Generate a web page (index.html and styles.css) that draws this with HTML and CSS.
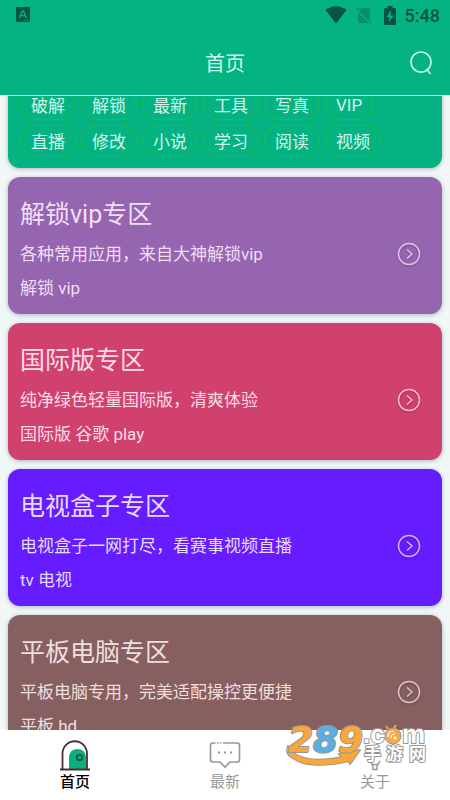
FILE: index.html
```html
<!DOCTYPE html>
<html lang="zh-CN">
<head>
<meta charset="utf-8">
<meta name="viewport" content="width=device-width, initial-scale=1">
<title>首页</title>
<link rel="stylesheet" href="styles.css">
</head>
<body>
<header class="top">
  <div class="status">
    <svg class="app-icon" width="14" height="16" viewBox="0 0 14 16"><rect y="0" width="14" height="15" rx="1" fill="#075540"/><path d="M3.500 11 6.200 4h1.400l2.700 7M4.600 8.800h4.600" fill="none" stroke="#05b382" stroke-width="1.500"/><path d="M8 13.300h4" stroke="#05b382" stroke-dasharray="1 .6"/></svg>
    <svg width="22" height="18" viewBox="0 0 22 18"><path d="M.5 4Q11-3.500 21.500 4L11 17.500Z" fill="#075540"/></svg>
    <svg class="sim" width="16" height="18" viewBox="0 0 16 18"><path d="M5 2h9v12.500L3.500 4ZM2 6l10.500 11H2Z" fill="#078f69"/><path d="m1 2 14 15" stroke="#078f69" stroke-width="1.300"/></svg>
    <svg class="battery" width="12" height="19" viewBox="0 0 12 19"><path d="M3.500 0h5v2H11q1 0 1 1v15q0 1-1 1H1q-1 0-1-1V3q0-1 1-1h2.500Z" fill="#075540"/><path d="M7 4.500 2.500 11H5.500L5 16l4.500-6.500H6.500Z" fill="#05b382"/></svg>
    <span class="clock">5:48</span>
  </div>
  <div class="bar">
    <h1>首页</h1>
    <button class="search" aria-label="搜索"><svg width="24" height="26" viewBox="0 0 24 26"><circle cx="11" cy="12" r="10" fill="none" stroke="#c6f7e8" stroke-width="1.600"/><path d="m16.500 19 4 5" stroke="#c6f7e8" stroke-width="1.600"/></svg></button>
  </div>
</header>
<main class="feed">
  <section class="card tags">
    <button class="chip">破解</button><button class="chip">解锁</button><button class="chip">最新</button><button class="chip">工具</button><button class="chip">写真</button><button class="chip">VIP</button>
    <button class="chip">直播</button><button class="chip">修改</button><button class="chip">小说</button><button class="chip">学习</button><button class="chip">阅读</button><button class="chip">视频</button>
  </section>
  <a class="card zone purple" href="#vip">
    <div><h2>解锁vip专区</h2><p>各种常用应用，来自大神解锁vip</p><p>解锁 vip</p></div>
    <svg class="go" width="24" height="24" viewBox="0 0 24 24"><circle cx="12" cy="12" r="10.500"/><path d="m10 7.500 5 4.500-5 4.500"/></svg>
  </a>
  <a class="card zone red" href="#global">
    <div><h2>国际版专区</h2><p>纯净绿色轻量国际版，清爽体验</p><p>国际版 谷歌 play</p></div>
    <svg class="go" width="24" height="24" viewBox="0 0 24 24"><circle cx="12" cy="12" r="10.500"/><path d="m10 7.500 5 4.500-5 4.500"/></svg>
  </a>
  <a class="card zone blue" href="#tv">
    <div><h2>电视盒子专区</h2><p>电视盒子一网打尽，看赛事视频直播</p><p>tv 电视</p></div>
    <svg class="go" width="24" height="24" viewBox="0 0 24 24"><circle cx="12" cy="12" r="10.500"/><path d="m10 7.500 5 4.500-5 4.500"/></svg>
  </a>
  <a class="card zone brown" href="#pad">
    <div><h2>平板电脑专区</h2><p>平板电脑专用，完美适配操控更便捷</p><p>平板 hd</p></div>
    <svg class="go" width="24" height="24" viewBox="0 0 24 24"><circle cx="12" cy="12" r="10.500"/><path d="m10 7.500 5 4.500-5 4.500"/></svg>
  </a>
</main>
<nav class="tabs">
  <a class="tab active" href="#home">
    <svg width="32" height="32" viewBox="0 0 32 32"><path d="M10 29V16.500Q11 9 18.500 9T27 16.500V29Z" fill="#08b080"/><path d="M3.500 29V13.500a12.200 12.200 0 0 1 24.500 0V29M1 29.500h30" fill="none" stroke="#4a302c" stroke-width="1.800"/><circle cx="20.500" cy="17.500" r="2.800" fill="none" stroke="#24483a" stroke-width="1.500"/></svg>
    <span>首页</span>
  </a>
  <a class="tab" href="#new">
    <svg width="32" height="32" viewBox="0 0 32 32"><path d="M6.500 3H4Q1.500 3 1.500 5.500v14Q1.500 22 4 22h7l5 5 5-5h7q2.500 0 2.500-2.500v-14Q30.500 3 28 3H14" fill="none" stroke="#999" stroke-width="1.700"/><path d="M8 3h1.800M11 3h1.500" stroke="#999" stroke-width="1.700"/><path d="M9 12.500h2M15 12.500h2M21 12.500h2" stroke="#999" stroke-width="2"/></svg>
    <span>最新</span>
  </a>
  <a class="tab" href="#about">
    <svg width="32" height="32" viewBox="0 0 32 32"><path d="m11 21 3 5v3.500h4V26l3-5M12 24.500h8" fill="none" stroke="#999" stroke-width="1.500"/></svg>
    <span>关于</span>
  </a>
  <svg class="brand" width="144" height="50" viewBox="0 0 144 50">
    <g stroke="#969696" stroke-width="2" paint-order="stroke" stroke-linejoin="round">
      <path d="M3 22Q0 30 8 34Q24 46 64 37l1 3L75 26 54 30l3 3Q24 40 8 29Q4 26 3 22Z" fill="#fba63a"/>
      <g font-family="DejaVu Sans" font-weight="bold" font-style="italic" font-size="36"><text x="3" y="28" fill="#fba63a">2</text><text x="28" y="28" fill="#5aaee2">8</text><text x="53" y="28" fill="#fba63a">9</text></g>
      <g font-family="Liberation Sans" font-weight="bold" font-size="26" fill="#fff"><text x="78" y="19">.c</text><text x="117" y="19">m</text></g>
      <g font-family="Noto Sans CJK SC" font-weight="bold" font-size="17" fill="#fff"><text x="79" y="36">手</text><text x="101" y="36">游</text><text x="124" y="36">网</text></g>
    </g>
    <circle cx="108" cy="12" r="8" fill="#f6aa47" stroke="#969696"/><path d="M103 13q0-6 6-6M106 14q0-4 4-4" fill="none" stroke="#fff" stroke-width="1.200"/><circle cx="110" cy="14" r="1.500" fill="#fff"/><path d="m103 5-2-3M109 4l2-3" stroke="#f6aa47" stroke-width="2"/>
  </svg>
</nav>
</body>
</html>
```
FILE: styles.css
```css
* { box-sizing: border-box; }
body {
  margin: 0;
  height: 100vh;
  display: flex;
  flex-direction: column;
  overflow: hidden;
  background: #f1f6f7;
  font-family: Roboto, "Noto Sans CJK SC", sans-serif;
}
h1, h2, p { margin: 0; font-weight: 400; }
a { color: inherit; text-decoration: none; }
button { border: 0; background: none; font: inherit; color: inherit; padding: 0; }
svg { display: block; flex: none; }

.top {
  flex: none;
  position: relative;
  z-index: 1;
  background: #05b382;
  border-bottom: 1px solid #c9fbea;
}
.status {
  height: 30px;
  padding: 0 10px 0 16px;
  display: flex;
  align-items: center;
  color: #075540;
}
.app-icon { margin-right: auto; }
.sim { margin: 0 12px 0 9px; }
.battery { margin-right: 9px; }
.clock { font-size: 18px; font-weight: 500; }
.bar {
  height: 65px;
  padding: 0 16px;
  display: grid;
  grid-template-columns: 1fr auto 1fr;
  align-items: center;
}
.bar h1 { grid-column: 2; font-size: 20px; color: #d0f8ec; }
.search { justify-self: end; }

.feed {
  flex: 1;
  min-height: 0;
  overflow: hidden;
  padding: 0 8px;
  display: flex;
  flex-direction: column;
  gap: 9px;
}
.card {
  flex: none;
  border-radius: 12px;
  box-shadow: 0 1px 4px rgba(40, 60, 80, 0.35);
}
.tags {
  margin-top: -20px;
  padding: 13px 12px 12px;
  display: grid;
  grid-template-columns: repeat(6, max-content);
  gap: 5px;
  justify-items: start;
  background: #05b382;
  color: #cff7ea;
}
.chip {
  height: 31px;
  padding: 0 10px;
  border: 1px solid #20bd48;
  border-radius: 16px;
  font-size: 17px;
}
.zone {
  padding: 17px 21px 9px 12px;
  display: flex;
  align-items: center;
  justify-content: space-between;
}
.zone h2 { margin-bottom: 1px; font-size: 25px; line-height: 42px; }
.zone p { font-size: 17px; line-height: 34px; }
.go { margin-top: 8px; fill: none; stroke: currentColor; stroke-width: 1.5px; opacity: 0.8; filter: drop-shadow(0 1px 1px rgba(0, 0, 0, 0.3)); }
.purple { background: #9565b0; color: #f1ddf6; }
.red { background: #d1416d; color: #fbdce5; }
.blue { background: #651cff; color: #e6daff; }
.brown { background: #865f60; color: #efdedd; }

.tabs {
  flex: none;
  position: relative;
  display: grid;
  grid-template-columns: repeat(3, 1fr);
  height: 70px;
  padding-top: 10px;
  background: #fff;
  color: #999;
}
.tab {
  display: flex;
  flex-direction: column;
  align-items: center;
  font-size: 15px;
  line-height: 20px;
}
.active { color: #000; font-weight: 500; }
.brand { position: absolute; right: 21px; top: -6px; }
```
